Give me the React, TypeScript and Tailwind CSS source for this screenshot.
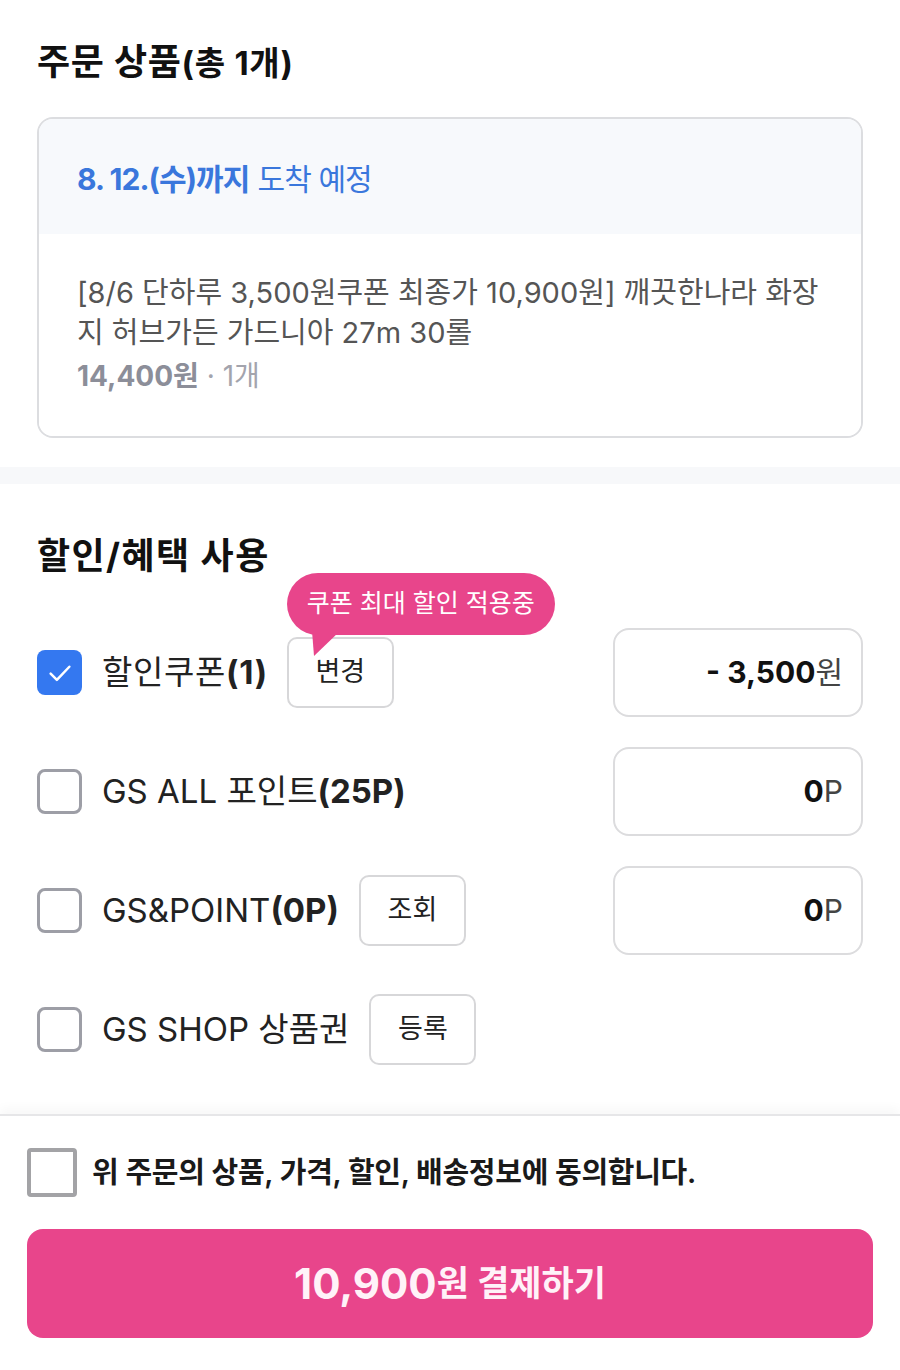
import React from "react";

const font = { fontFamily: '"Inter", "Noto Sans CJK KR", sans-serif' };

function CheckBox({ checked }: { checked?: boolean }) {
  if (checked) {
    return (
      <div className="flex h-[45px] w-[45px] shrink-0 items-center justify-center rounded-[8px] bg-[#3478f0]">
        <svg width="30" height="30" viewBox="0 0 24 24" fill="none" stroke="white" strokeWidth="2" strokeLinecap="round" strokeLinejoin="round">
          <path d="M4.5 12.5l5 5L19.5 7" />
        </svg>
      </div>
    );
  }
  return <div className="h-[45px] w-[45px] shrink-0 rounded-[8px] border-[3px] border-[#9d9ea6] bg-white" />;
}

function SmallButton({ label }: { label: string }) {
  return (
    <div className="flex h-[71px] w-[107px] shrink-0 items-center justify-center rounded-[10px] border-2 border-[#d7d7d9] bg-white text-[27px] text-[#222]">
      {label}
    </div>
  );
}

function ValueBox({ children }: { children: React.ReactNode }) {
  return (
    <div className="ml-auto flex h-[89px] w-[250px] shrink-0 items-center justify-end rounded-[16px] border-2 border-[#dcdcde] bg-white pr-[18px] text-[30px] text-[#111]">
      {children}
    </div>
  );
}

export default function App() {
  return (
    <div className="min-h-[1370px] w-[900px] bg-white text-[#111]" style={font}>
      {/* 주문 상품 */}
      <section className="px-[37px] pt-[40px] pb-[29px]">
        <h2 className="text-[36px] font-bold leading-[44px] tracking-[0.02em]">
          주문 상품<span className="text-[33px]">(총 1개)</span>
        </h2>
        <div className="mt-[32px] overflow-hidden rounded-[16px] border-2 border-[#dcdde0]">
          <div className="flex h-[115px] items-center bg-[#f7f9fc] px-[38px] pt-[6px] text-[30px] tracking-[-0.03em] text-[#3a77dc]">
            <span className="font-bold">8. 12.(수)까지</span>
            <span className="ml-[8px]">도착 예정</span>
          </div>
          <div className="bg-white px-[38px] pt-[39px] pb-[40px]">
            <p className="text-[29px] leading-[40px] text-[#555]">
              [8/6 단하루 3,500원쿠폰 최종가 10,900원] 깨끗한나라 화장
              <br />
              지 허브가든 가드니아 27m 30롤
            </p>
            <p className="mt-[3px] text-[28px] leading-[40px]">
              <span className="font-bold text-[#8c8e99]">14,400원</span>
              <span className="text-[#a3a4ad]"> · 1개</span>
            </p>
          </div>
        </div>
      </section>

      <div className="h-[17px] bg-[#f7f8fa]" />

      {/* 할인/혜택 사용 */}
      <section className="px-[37px] pt-[50px] pb-[40px]">
        <h2 className="text-[36px] font-bold leading-[44px] tracking-[0.04em]">할인/혜택 사용</h2>

        <div className="mt-[50px] flex flex-col gap-[30px]">
          <div className="flex h-[89px] items-center">
            <CheckBox checked />
            <span className="ml-[20px] text-[33px] tracking-[0.02em] text-[#222]">
              할인쿠폰<span className="font-bold">(1)</span>
            </span>
            <div className="relative ml-[19px]">
              <SmallButton label="변경" />
              <div className="absolute left-0 top-[-64px] flex h-[62px] w-[268px] items-center justify-center rounded-full bg-[#e8458b] text-[25px] text-white">
                쿠폰 최대 할인 적용중
                <svg className="absolute left-[25px] top-[58px]" width="28" height="26" viewBox="0 0 28 26">
                  <path d="M0 0 L28 0 L2 25 Z" fill="#e8458b" />
                </svg>
              </div>
            </div>
            <ValueBox>
              <span className="font-bold">- 3,500</span>
              <span className="text-[#444]">원</span>
            </ValueBox>
          </div>

          <div className="flex h-[89px] items-center">
            <CheckBox />
            <span className="ml-[20px] text-[33px] text-[#222]">
              GS ALL 포인트<span className="font-bold">(25P)</span>
            </span>
            <ValueBox>
              <span className="font-bold">0</span>
              <span className="text-[#444]">P</span>
            </ValueBox>
          </div>

          <div className="flex h-[89px] items-center">
            <CheckBox />
            <span className="ml-[20px] text-[33px] text-[#222]">
              GS&amp;POINT<span className="font-bold">(0P)</span>
            </span>
            <div className="ml-[20px]">
              <SmallButton label="조회" />
            </div>
            <ValueBox>
              <span className="font-bold">0</span>
              <span className="text-[#444]">P</span>
            </ValueBox>
          </div>

          <div className="flex h-[89px] items-center">
            <CheckBox />
            <span className="ml-[20px] text-[33px] text-[#222]">GS SHOP 상품권</span>
            <div className="ml-[20px]">
              <SmallButton label="등록" />
            </div>
          </div>
        </div>
      </section>

      {/* 하단 결제 영역 */}
      <footer className="border-t-2 border-[#e6e6e8] px-[27px] pt-[32px] pb-[32px] shadow-[0_-6px_10px_rgba(0,0,0,0.03)]">
        <div className="flex items-center">
          <div className="h-[49px] w-[50px] shrink-0 rounded-[4px] border-[4px] border-[#a3a3a6] bg-white" />
          <span className="ml-[15px] text-[29px] font-semibold tracking-[-0.01em] text-[#1a1a1a]">
            위 주문의 상품, 가격, 할인, 배송정보에 동의합니다.
          </span>
        </div>
        <button className="mt-[32px] flex h-[109px] w-full items-center justify-center rounded-[16px] bg-[#e8458b] text-[#fff2f8]">
          <span className="text-[42px] font-bold">10,900</span>
          <span className="text-[35px] font-bold">원 결제하기</span>
        </button>
      </footer>
    </div>
  );
}
